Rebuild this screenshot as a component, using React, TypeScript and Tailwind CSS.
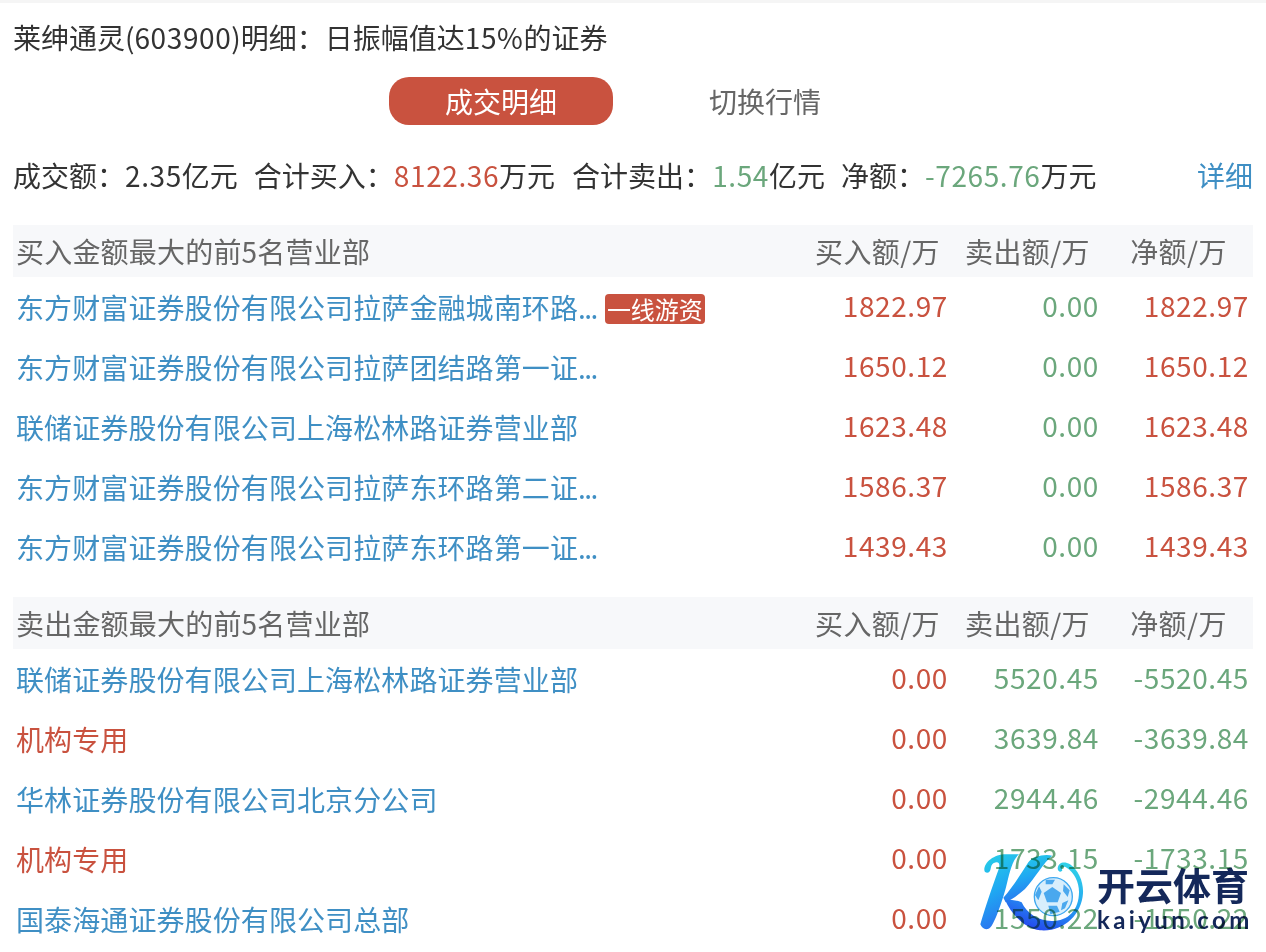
import React from 'react';

const buyRows = [
  { name: '东方财富证券股份有限公司拉萨金融城南环路...', tag: '一线游资', buy: '1822.97', sell: '0.00', net: '1822.97' },
  { name: '东方财富证券股份有限公司拉萨团结路第一证...', buy: '1650.12', sell: '0.00', net: '1650.12' },
  { name: '联储证券股份有限公司上海松林路证券营业部', buy: '1623.48', sell: '0.00', net: '1623.48' },
  { name: '东方财富证券股份有限公司拉萨东环路第二证...', buy: '1586.37', sell: '0.00', net: '1586.37' },
  { name: '东方财富证券股份有限公司拉萨东环路第一证...', buy: '1439.43', sell: '0.00', net: '1439.43' },
];

const sellRows = [
  { name: '联储证券股份有限公司上海松林路证券营业部', buy: '0.00', sell: '5520.45', net: '-5520.45' },
  { name: '机构专用', inst: true, buy: '0.00', sell: '3639.84', net: '-3639.84' },
  { name: '华林证券股份有限公司北京分公司', buy: '0.00', sell: '2944.46', net: '-2944.46' },
  { name: '机构专用', inst: true, buy: '0.00', sell: '1733.15', net: '-1733.15' },
  { name: '国泰海通证券股份有限公司总部', buy: '0.00', sell: '1550.22', net: '-1550.22' },
];

const RowName = ({ name }: any) => {
  const cut = name.endsWith('...');
  return (
    <span className="tracking-[0.1px]">
      {name.replace('...', '')}
      {cut && <span className="tracking-[-1.5px]">...</span>}
    </span>
  );
};

const Section = ({ title, rows, netColor }: any) => (
  <div>
    <div className="flex h-[52px] items-center bg-[#f7f8fa] pl-[3px] text-[#666666]">
      <span className="flex-1 tracking-[0.2px]">{title}</span>
      <span className="w-[123px] whitespace-nowrap text-center tracking-[0.4px]">买入额/万</span>
      <span className="ml-[27px] w-[123px] whitespace-nowrap text-center tracking-[0.4px]">卖出额/万</span>
      <span className="ml-[27px] mr-[15px] w-[123px] whitespace-nowrap pl-[4px] text-center tracking-[0.4px]">净额/万</span>
    </div>
    {rows.map((r: any, i: number) => (
      <div key={i} className="flex h-[60px] items-center pl-[3px] pr-1">
        <div className={`flex flex-1 items-center ${r.inst ? 'text-[#c9523f]' : 'text-[#3f8fc4]'}`}>
          <RowName name={r.name} />
          {r.tag && (
            <span className="ml-[8px] mt-[3px] h-[30px] rounded-[4px] bg-[#c9523f] px-[2px] text-[24px] leading-[29px] text-white">{r.tag}</span>
          )}
        </div>
        <span className="w-[150px] pb-[4px] text-right tracking-[0.6px] text-[#c9523f]">{r.buy}</span>
        <span className="w-[151px] pb-[4px] text-right tracking-[0.6px] text-[#6ba77c]">{r.sell}</span>
        <span className={`w-[150px] pb-[4px] text-right tracking-[0.6px] ${netColor}`}>{r.net}</span>
      </div>
    ))}
  </div>
);

const Logo = () => (
  <div className="absolute left-[975px] top-[845px] flex h-[95px] w-[285px] mix-blend-multiply">
    <svg width="120" height="95" viewBox="0 0 360 285" className="shrink-0">
      <defs>
        <linearGradient id="kg" x1="0" y1="0" x2="0.3" y2="1">
          <stop offset="0" stopColor="#28d3e6" />
          <stop offset="0.55" stopColor="#1fa8f2" />
          <stop offset="1" stopColor="#2a75f0" />
        </linearGradient>
        <linearGradient id="kh" gradientUnits="userSpaceOnUse" x1="250" y1="50" x2="180" y2="255">
          <stop offset="0" stopColor="#2fd0e8" />
          <stop offset="0.5" stopColor="#25a5f2" />
          <stop offset="1" stopColor="#2448ee" />
        </linearGradient>
      </defs>
      <path d="M28 75 C28 50 60 25 100 28 L132 28 C112 45 105 80 97 110 C88 150 65 220 50 242 C40 258 22 255 16 238 C30 190 50 130 72 70 C76 52 68 48 55 55 C45 62 50 75 42 82 C35 85 28 82 28 75 Z" fill="url(#kg)" />
      <path d="M85 158 C115 125 135 90 160 52 C172 36 205 26 232 32 C205 52 180 100 150 132 C130 150 108 165 92 172 Z" fill="url(#kg)" />
      <path d="M90 165 C110 165 128 165 140 172 C155 205 190 228 230 228 C280 228 312 195 312 140 C312 112 298 82 275 68 C266 62 258 68 262 76 C258 84 248 80 248 70 C250 52 268 48 285 58 C310 75 326 110 324 145 C320 210 265 262 195 256 C150 250 110 210 90 165 Z" fill="url(#kh)" />
      <circle cx="235" cy="155" r="57" fill="#d8eefc" stroke="#3fa9f0" strokeWidth="4" />
      <path d="M232 126 L258 144 L248 172 L216 172 L206 144 Z" fill="#4aa8ee" />
      <path d="M212 104 L240 104 L232 118 L212 118 Z M266 118 L284 136 L278 156 L264 138 Z M192 124 L200 140 L190 166 L180 150 Z M220 182 L246 182 L254 200 L226 208 Z M262 174 L280 166 L270 190 L258 196 Z" fill="#4aa8ee" />
    </svg>
    <div className="ml-[2px] mt-[16px] flex flex-col text-[#14285a]">
      <span className="text-[38px] font-bold leading-[46px]">开云体育</span>
      <span className="font-['Lato',sans-serif] text-[24px] font-bold leading-[26px] tracking-[3.4px]">kaiyun.com</span>
    </div>
  </div>
);

const Num = ({ children }: any) => <span className="tracking-[0.6px]">{children}</span>;

export default function App() {
  return (
    <div className="relative h-[952px] w-[1266px] overflow-hidden bg-white font-['Noto_Sans_CJK_SC','Noto_Sans',sans-serif] text-[28px] leading-[40px] text-[#333333]">
      <div className="h-[3px] bg-[#f5f5f5]" />
      <div className="px-[13px]">
        <div className="flex h-[70px] items-center pb-[2px]">
          <div>
            莱绅通灵(<Num>603900</Num>)明细：日振幅值达<Num>15%</Num>的证券
          </div>
        </div>
        <div className="mt-[4px] flex h-[48px] items-center">
          <div className="ml-[376px] flex h-[48px] w-[224px] items-center justify-center rounded-[20px] bg-[#c9523f] text-white">成交明细</div>
          <div className="ml-[96px] text-[#666666]">切换行情</div>
        </div>
        <div className="mt-[26px] flex h-[48px] items-center justify-between">
          <div>
            成交额：<Num>2.35</Num>亿元
            <span className="ml-[16px]">合计买入：</span>
            <span className="text-[#c9523f]"><Num>8122.36</Num></span>万元
            <span className="ml-[17px]">合计卖出：</span>
            <span className="text-[#6ba77c]"><Num>1.54</Num></span>亿元
            <span className="ml-[16px]">净额：</span>
            <span className="text-[#6ba77c]"><Num>-7265.76</Num></span>万元
          </div>
          <span className="text-[#3f8fc4]">详细</span>
        </div>
        <div className="mt-[26px]">
          <Section title="买入金额最大的前5名营业部" rows={buyRows} netColor="text-[#c9523f]" />
        </div>
        <div className="mt-[20px]">
          <Section title="卖出金额最大的前5名营业部" rows={sellRows} netColor="text-[#6ba77c]" />
        </div>
      </div>
      <Logo />
    </div>
  );
}
